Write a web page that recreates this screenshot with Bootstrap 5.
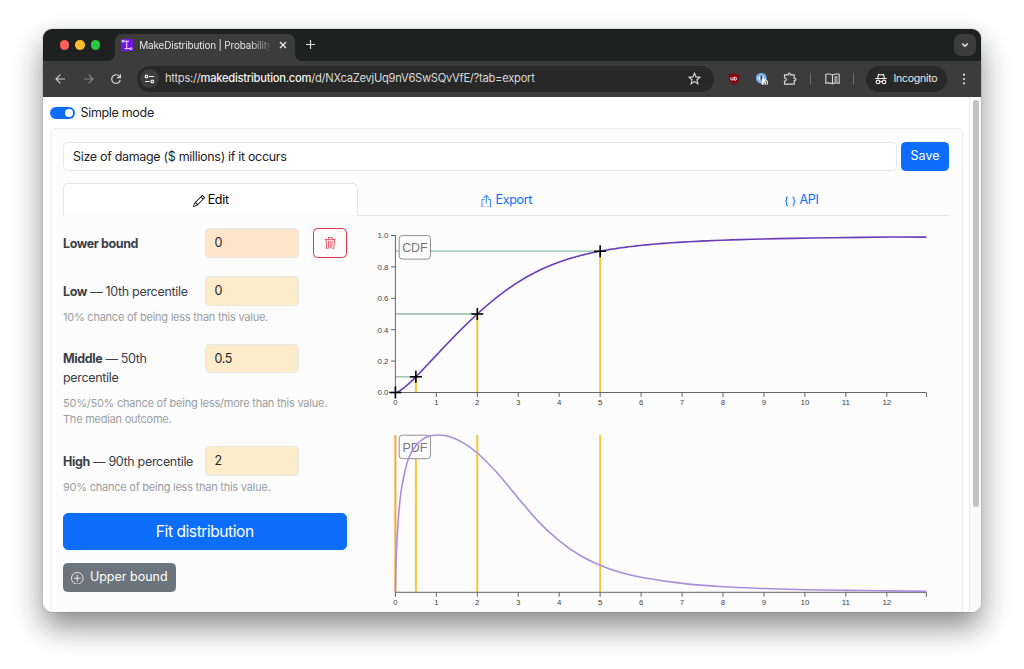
<!DOCTYPE html>
<html lang="en">
<head>
<meta charset="utf-8">
<title>MakeDistribution | Probability</title>
<link href="https://cdn.jsdelivr.net/npm/bootstrap@5.3.0/dist/css/bootstrap.min.css" rel="stylesheet">
<style>
html{font-size:12.5px}
body{font-family:Inter,"Liberation Sans",sans-serif;background:#fff;overflow:hidden;height:669px;padding:29px 43px;line-height:1.5;color:#212529;letter-spacing:-.32px}
svg{display:block;flex:none}
.window{width:938px;height:582.5px;border-radius:9px;box-shadow:0 0 1px rgba(0,0,0,.7),0 15px 30px rgba(0,0,0,.46)}
.window-clip{border-radius:9px;overflow:hidden;height:100%;background:#fff}
.tabstrip{height:31.5px;background:#1f2020;padding-left:16.5px}
.light{width:9.6px;height:9.6px;border-radius:50%;margin-right:6px}
.browser-tab{position:relative;margin-left:9px;margin-top:5px;width:179.5px;height:26.5px;background:#3c3c3c;border-radius:7px 7px 0 0;padding:0 8px 4.5px 6px;color:#e6e6e6;font-size:10px;letter-spacing:-.2px}
.browser-tab::before,.browser-tab::after{content:"";position:absolute;bottom:0;width:7px;height:7px}
.browser-tab::before{left:-7px;background:radial-gradient(circle at 0 0,transparent 6.8px,#3c3c3c 7px)}
.browser-tab::after{right:-7px;background:radial-gradient(circle at 100% 0,transparent 6.8px,#3c3c3c 7px)}
.tab-title{width:130px;white-space:nowrap;-webkit-mask-image:linear-gradient(90deg,#000 84%,rgba(0,0,0,.25))}
.tab-menu{width:21.5px;height:21.5px;border-radius:7px;background:#3c3c3c;margin:0 5.5px 0 auto}
.toolbar-row{height:36.5px;background:#3c3c3c;padding-left:11px;color:#dcdcdc}
.omnibox{width:577px;height:26px;border-radius:13px;background:#282828;padding:0 12.5px 0 3.5px}
.tune{width:19px;height:19px;border-radius:50%;background:#3c3c3c}
.url{margin-left:6px;font-size:11.2px;white-space:nowrap;color:#d8d8d8;letter-spacing:-.27px}
.url b{font-weight:500;color:#f2f2f2}
.sep{width:1px;height:12px;background:#6c6c6c}
.incog{height:26px;width:81px;border-radius:13px;background:#282828;font-size:10.6px;letter-spacing:-.3px;color:#e8e8e8;padding-left:9px}
.page{height:514.5px}
.page-main{width:926px;padding:0 6.5px 0 7px}
.scroll-track{width:12px;background:#fafafa;border-left:1px solid #e9e9e9;padding:2.5px 0 0 2.5px}
.scroll-thumb{width:6.5px;height:407px;border-radius:4px;background:#c1c1c1}
.mode-row{height:31px;padding-top:1px}
.switch{width:25px;height:12.5px;border-radius:7px;background:#0d6efd;padding:2px;margin-right:5.5px}
.switch i{width:8.5px;height:8.5px;border-radius:50%;background:#fff;margin-left:auto}
.panel{height:500px;border:1px solid #efefef;border-radius:5px;background:#fcfcfc;padding:12.5px 12.5px 0 12px}
.panel .form-control{border-color:#e5e8ea;border-radius:4.5px;height:29.5px;padding:0 9px;color:#212529;font-size:12.5px;letter-spacing:-.32px}
.panel .btn{border-radius:4.5px;font-size:12.5px}
.save{width:48px;height:29.5px;padding:1px 0 0}
.nav-tabs{margin-top:12px;border-color:#e3e6e8}
.nav-tabs .nav-link{height:32.5px;padding:1.5px 0 0;border-radius:5px 5px 0 0}
.nav-tabs .nav-link.active{border-color:#e3e6e8 #e3e6e8 #fcfcfc;color:#000}
.form-side{width:283.5px;margin-top:12.5px;color:#3c4147}
.field{height:29.5px}
.field-label{width:141.5px;padding-top:5.5px;line-height:19px;flex:none}
.field-label b{letter-spacing:-.4px}
.two-line{height:48.5px}
.panel .form-control.val{width:94px}
.bg-bound{background:#ffe5ca}
.bg-quant{background:#fdecc9}
.hint{font-size:11px;line-height:16px;color:#9b9ea2;letter-spacing:-.24px}
.trash{width:33.5px;height:29.5px;margin-left:14.5px;padding:0}
.panel .fit{height:37px;font-size:15.5px;letter-spacing:-.42px;padding:1px 0 0;width:283.5px;border-radius:5px}
.upper{width:113px;height:29.5px;padding:1px 0 0}
.plots{margin-left:13px}
.tick text{font:7.9px "Liberation Sans",sans-serif;fill:#444;letter-spacing:0}
.badge-text{font:12.400px "Liberation Sans",sans-serif;fill:#777;letter-spacing:0}
</style>
</head>
<body>
<div class="window"><div class="window-clip">
  <div class="tabstrip d-flex align-items-center">
    <div class="light" style="background:#ff5f57"></div><div class="light" style="background:#febc2e"></div><div class="light" style="background:#28c840"></div>
    <div class="browser-tab d-flex align-items-center">
      <svg width="12" height="12" viewBox="0 0 12 12" style="margin-right:6px"><rect width="12" height="12" rx="1.5" fill="#7412ee"/><g fill="none" stroke="#fff" stroke-width=".9"><circle cx="1.9" cy="2.2" r="1"/><path d="M3 2.2h5M5.7 2.2v7.3M3.6 9.6H9"/><circle cx="10" cy="9.7" r="1"/></g></svg>
      <div class="tab-title">MakeDistribution | Probability</div>
      <svg width="8" height="8" viewBox="0 0 8 8" class="ms-auto" stroke="#eee" stroke-width="1.3"><path d="M1 1l6 6M7 1L1 7"/></svg>
    </div>
    <svg width="9" height="9" viewBox="0 0 9 9" style="margin-left:11px" stroke="#ddd" stroke-width="1.2"><path d="M4.5 0v9M0 4.5h9"/></svg>
    <div class="tab-menu d-flex align-items-center justify-content-center"><svg width="8" height="6" viewBox="0 0 8 6" fill="none" stroke="#eee" stroke-width="1.4"><path d="M1.2 1.5L4 4.2l2.800-2.700"/></svg></div>
  </div>
  <div class="toolbar-row d-flex align-items-center">
    <svg width="13" height="12" viewBox="0 0 13 12" fill="none" stroke="#d0d0d0" stroke-width="1.1"><path d="M11 6H2M6.300 1.700L2 6l4.300 4.300"/></svg>
    <svg width="13" height="12" viewBox="0 0 13 12" fill="none" stroke="#858585" stroke-width="1.1" style="margin-left:15px"><path d="M2 6h9M6.700 1.700L11 6l-4.300 4.300"/></svg>
    <svg width="12" height="12" viewBox="0 0 12 12" fill="none" stroke="#d0d0d0" stroke-width="1.2" style="margin-left:15px"><path d="M10.200 7A4.300 4.300 0 1 1 9.300 3.300L10.300 4.500M10.400 1.200v3.500H7"/></svg>
    <div class="omnibox d-flex align-items-center" style="margin-left:14.500px">
      <div class="tune d-flex align-items-center justify-content-center"><svg width="11" height="10" viewBox="0 0 11 10" fill="none" stroke="#eee" stroke-width="1.200"><circle cx="2.500" cy="2.500" r="1.300"/><path d="M5 2.500h5M1 7.500h4.500"/><circle cx="8.300" cy="7.500" r="1.300"/></svg></div>
      <div class="url">https://<b>makedistribution.com</b>/d/NXcaZevjUq9nV6SwSQvVfE/?tab=export</div>
      <svg width="13" height="13" viewBox="0 0 13 13" class="ms-auto" fill="none" stroke="#dcdcdc" stroke-width="1.100"><path d="M6.500 1.200l1.500 3.700 4 .3-3.100 2.600 1 3.900-3.400-2.100-3.400 2.100 1-3.900L1 5.200l4-.3z"/></svg>
    </div>
    <svg width="12" height="12" viewBox="0 0 12 12" style="margin-left:14px"><path d="M6 0c1.500 1 3.500 1.400 5.300 1.500C11.500 6 11 9.500 6 12 1 9.500.5 6 .7 1.500 2.500 1.400 4.500 1 6 0z" fill="#800610"/><path d="M2.900 4.200v1.900a1.100 1.100 0 0 0 2.200 0V4.200M6.300 4.200v3h.8a1.500 1.500 0 0 0 0-3z" fill="none" stroke="#fff" stroke-width=".9"/></svg>
    <svg width="13" height="13" viewBox="0 0 13 13" style="margin-left:15.500px"><circle cx="6.300" cy="6.200" r="5.500" fill="#5b9be0"/><circle cx="6.300" cy="6.200" r="4.300" fill="#e9f3ff"/><circle cx="6.300" cy="6.200" r="3.300" fill="none" stroke="#6ba5e4" stroke-width="1.100"/><rect x="5.500" y="3.600" width="1.700" height="5.200" rx=".8" fill="#1d3557"/><path d="M6.800 13V8.500l-.3-1.500h3.500l2.800 2v3.500H8.500z" fill="#f4f4f4"/><path d="M9.800 9.300a1 1 0 0 1 1.600.8v2M9.300 12.300v-1.500" stroke="#333" fill="none" stroke-width=".8"/></svg>
    <svg width="14" height="14" viewBox="0 0 14 14" style="margin-left:15px" fill="none" stroke="#d6d6d6" stroke-width="1.200"><path d="M1.500 2.800H5.200V2.200a1.100 1.100 0 0 1 2.200 0v.6H11.200v3.500h.5a1.100 1.100 0 0 1 0 2.200h-.5v3.700H1.500V9.300C3.900 9 3.900 6.100 1.500 5.800z"/></svg>
    <div class="sep" style="margin-left:13px"></div>
    <svg width="15" height="12" viewBox="0 0 15 12" style="margin-left:14px" fill="none" stroke="#d6d6d6" stroke-width="1.100"><path d="M7.500 2C5.500.800 3 .800.800 1.300v8.900c2.200-.5 4.700-.5 6.700.7 2-1.200 4.500-1.200 6.700-.7V1.300C12 .8 9.500.8 7.500 2v8.900M9.300 4.300c1-.4 2-.5 3.200-.4M9.300 6.300c1-.4 2-.5 3.200-.4M9.300 8.300c1-.4 2-.5 3.200-.4"/></svg>
    <div class="sep" style="margin-left:13px"></div>
    <div class="incog d-flex align-items-center" style="margin-left:12px">
      <svg width="12" height="12" viewBox="0 0 12 12" style="margin-right:6.500px" fill="none" stroke="#eee" stroke-width="1.200"><path d="M.300 5.500h11.400M2.600 5.200l1-3.800L6 2l2.400-.600 1 3.800"/><circle cx="3" cy="8.900" r="1.800"/><circle cx="9" cy="8.900" r="1.800"/><path d="M4.800 8.700q1.200-.800 2.400 0"/></svg>Incognito</div>
    <svg width="4" height="12" viewBox="0 0 4 12" style="margin-left:15px" fill="#dcdcdc"><circle cx="2" cy="1.700" r="1.100"/><circle cx="2" cy="6" r="1.100"/><circle cx="2" cy="10.300" r="1.100"/></svg>
  </div>

  <div class="page d-flex">
    <div class="page-main">
      <div class="mode-row d-flex align-items-center"><div class="switch d-flex"><i></i></div>Simple mode</div>
      <div class="panel">
        <div class="d-flex justify-content-between">
          <input class="form-control" style="width:833.500px" value="Size of damage ($ millions) if it occurs">
          <button class="btn btn-primary save">Save</button>
        </div>
        <ul class="nav nav-tabs nav-justified">
          <li class="nav-item"><a class="nav-link active d-flex align-items-center justify-content-center"><svg width="12" height="12" viewBox="0 0 16 16" fill="currentColor" style="margin:2px 3px 0 0"><path d="M12.146.146a.5.5 0 0 1 .708 0l3 3a.5.5 0 0 1 0 .708l-10 10a.5.5 0 0 1-.168.110l-5 2a.5.5 0 0 1-.650-.650l2-5a.5.5 0 0 1 .110-.168l10-10zM11.207 2.500 13.500 4.793 14.793 3.500 12.500 1.207 11.207 2.500zm1.586 3L10.500 3.207 4 9.707V10h.5a.5.5 0 0 1 .5.5v.5h.5a.5.5 0 0 1 .5.5v.5h.293l6.500-6.500zm-9.761 5.175-.106.106-1.528 3.821 3.821-1.528.106-.106A.5.5 0 0 1 5 12.500V12h-.5a.5.5 0 0 1-.5-.5V11h-.5a.5.5 0 0 1-.468-.325z"/></svg>Edit</a></li>
          <li class="nav-item"><a class="nav-link d-flex align-items-center justify-content-center"><svg width="12.500" height="12.500" viewBox="0 0 16 16" fill="currentColor" style="margin:2px 3px 0 0"><path fill-rule="evenodd" d="M3.500 6a.5.5 0 0 0-.5.5v8a.5.5 0 0 0 .5.5h9a.5.5 0 0 0 .5-.5v-8a.5.5 0 0 0-.5-.5h-2a.5.5 0 0 1 0-1h2A1.500 1.500 0 0 1 14 6.500v8a1.500 1.500 0 0 1-1.500 1.500h-9A1.500 1.500 0 0 1 2 14.500v-8A1.500 1.500 0 0 1 3.500 5h2a.5.5 0 0 1 0 1h-2z"/><path fill-rule="evenodd" d="M7.646.146a.5.5 0 0 1 .708 0l3 3a.5.5 0 0 1-.708.708L8.500 1.707V10.500a.5.5 0 0 1-1 0V1.707L5.354 3.854a.5.5 0 1 1-.708-.708l3-3z"/></svg>Export</a></li>
          <li class="nav-item"><a class="nav-link d-flex align-items-center justify-content-center"><svg width="12.500" height="12.500" viewBox="0 0 16 16" fill="none" stroke="currentColor" stroke-width="1.300" style="margin:2px 3px 0 0"><path d="M5 2.600H4.600Q3.200 2.600 3.200 4.200V6.400Q3.200 8 1.400 8 3.200 8 3.200 9.600V11.800Q3.200 13.400 4.600 13.400H5M11 2.600H11.400Q12.800 2.600 12.800 4.200V6.400Q12.800 8 14.600 8 12.800 8 12.800 9.600V11.800Q12.800 13.400 11.400 13.400H11"/></svg>API</a></li>
        </ul>
        <div class="d-flex">
          <div class="form-side">
            <div class="field d-flex"><div class="field-label"><b>Lower bound</b></div><input class="form-control val bg-bound" value="0">
              <button class="btn btn-outline-danger trash d-flex align-items-center justify-content-center"><svg width="12.500" height="12.500" viewBox="0 0 16 16" fill="currentColor"><path d="M6.500 1h3a.5.5 0 0 1 .5.5v1H6v-1a.5.5 0 0 1 .5-.5ZM11 2.500v-1A1.500 1.500 0 0 0 9.500 0h-3A1.500 1.500 0 0 0 5 1.500v1H2.506a.58.58 0 0 0-.010 0H1.500a.5.5 0 0 0 0 1h.538l.853 10.660A2 2 0 0 0 4.885 16h6.230a2 2 0 0 0 1.994-1.840l.853-10.660h.538a.5.5 0 0 0 0-1h-.995a.59.59 0 0 0-.010 0H11Zm1.958 1-.846 10.580a1 1 0 0 1-.997.920h-6.230a1 1 0 0 1-.997-.920L3.042 3.500h9.916Zm-7.487 1a.5.5 0 0 1 .528.470l.5 8.500a.5.5 0 0 1-.998.060L5 5.030a.5.5 0 0 1 .470-.530Zm5.058 0a.5.5 0 0 1 .470.530l-.5 8.500a.5.5 0 1 1-.998-.060l.5-8.500a.5.5 0 0 1 .528-.470ZM8 4.500a.5.5 0 0 1 .5.5v8.500a.5.5 0 0 1-1 0V5a.5.5 0 0 1 .5-.5Z"/></svg></button></div>
            <div class="field d-flex" style="margin-top:18.500px"><div class="field-label"><b>Low</b> — 10th percentile</div><input class="form-control val bg-quant" value="0"></div>
            <div class="hint" style="margin-top:3px">10% chance of being less than this value.</div>
            <div class="field two-line d-flex" style="margin-top:19px"><div class="field-label"><b>Middle</b> — 50th<br>percentile</div><input class="form-control val bg-quant" value="0.5"></div>
            <div class="hint" style="margin-top:3px">50%/50% chance of being less/more than this value.<br>The median outcome.</div>
            <div class="field d-flex" style="margin-top:19px"><div class="field-label"><b>High</b> — 90th percentile</div><input class="form-control val bg-quant" value="2"></div>
            <div class="hint" style="margin-top:3px">90% chance of being less than this value.</div>
            <button class="btn btn-primary fit" style="margin-top:18.500px">Fit distribution</button>
            <button class="btn btn-secondary upper d-flex align-items-center justify-content-center" style="margin-top:12.500px"><svg width="12.500" height="12.500" viewBox="0 0 16 16" fill="none" stroke="currentColor" style="margin-right:6px"><circle cx="8" cy="8" r="7.500"/><path d="M8 4v8M4 8h8" stroke-linecap="round"/></svg>Upper bound</button>
          </div>
          <svg class="plots" id="plots" width="590" height="396" viewBox="360 216 590 396"></svg>
        </div>
      </div>
    </div>
    <div class="scroll-track"><div class="scroll-thumb"></div></div>
  </div>
</div></div>
<script src="https://cdn.jsdelivr.net/npm/bootstrap@5.3.0/dist/js/bootstrap.bundle.min.js"></script>
<script>
const X = v => 395.4 + v * 40.95, XMAX = 926.4;
let out = '';
const line = (x1, y1, x2, y2, c, w) => { out += `<path d="M${x1} ${y1}L${x2} ${y2}" stroke="${c}" stroke-width="${w}" fill="none"/>`; };
const label = (x, y, t, anchor) => { out += `<g class="tick"><text x="${x}" y="${y}" text-anchor="${anchor}">${t}</text></g>`; };
function xAxis(y) {
  out += `<path d="M395.4 ${y}H${XMAX}v4.5" stroke="#555" stroke-width=".9" fill="none"/>`;
  for (let i = 0; i <= 12; i++) { line(X(i), y, X(i), y + 4.5, '#555', .9); label(X(i), y + 12.4, i, 'middle'); }
}
// Cumulative plot
const Y = p => 392.5 - p * 157;
const quantiles = [[.5, .1], [2, .5], [5, .9]];
quantiles.forEach(([x, p]) => { line(395.4, Y(p), X(x), Y(p), '#8dbda0', 1.3); line(X(x), Y(p), X(x), 392.5, '#f9c637', 2); });
out += `<path d="M391 235.500H395.400V392.500" stroke="#555" stroke-width=".9" fill="none"/>`;
for (let i = 0; i <= 5; i++) { const p = i / 5; line(391, Y(p), 395.4, Y(p), '#555', .9); label(388.500, Y(p) + 2.800, p.toFixed(1), 'end'); }
xAxis(392.5);
let d = 'M395.4 392.5';
for (let p = .002; p < .995; p += .002) {
  const L = Math.log(p / (1 - p)), x = Math.exp(.6931 + .524 * L - .2674 * (p - .5) * L);
  if (X(x) > XMAX) break;
  d += `L${X(x).toFixed(2)} ${Y(p).toFixed(2)}`;
}
d += `L${XMAX} 237.1`;
out += `<path d="${d}" stroke="#6a3cb8" stroke-width="1.600" stroke-linejoin="round" fill="none"/>`;
[[0, 0], ...quantiles].forEach(([x, p]) => { line(X(x) - 6, Y(p), X(x) + 6, Y(p), '#000', 1.6); line(X(x), Y(p) - 6, X(x), Y(p) + 6, '#000', 1.6); });
const box = (y, t) => { out += `<rect x="399.200" y="${y}" width="31.300" height="23.500" rx="3" fill="#fcfcfc" stroke="#858585" stroke-width=".9"/><text class="badge-text" x="414.900" y="${y + 16.4}" text-anchor="middle">${t}</text>`; };
box(235.6, 'CDF');
// Density plot
[[0, '#fba931'], [.5, '#f9c637'], [2, '#f9c637'], [5, '#f9c637']].forEach(([x, c]) => line(X(x), 435, X(x), 592.2, c, 2));
xAxis(592.3);
box(435.2, 'PDF');
const pts = [[395.4,592],[396,563],[398,523],[400.8,493.500],[404,475.500],[408.500,458.500],[415.700,445.800],[423.300,438.900],[430,436.100],[437.700,435],[450,436.700],[463.300,442.900],[477.300,453],[497,472.800],[518.300,498.200],[538.500,521.600],[559.300,540.800],[579,554.800],[600,565.200],[620,572.200],[641,577.200],[682.300,583.400],[723.300,586.800],[764,588.500],[805,589.700],[846,590.400],[887,590.900],[XMAX,591.300]];
let c = `M${pts[0]}`;
for (let i = 0; i < pts.length - 1; i++) {
  const a = pts[Math.max(0, i - 1)], b = pts[i], e = pts[i + 1], f = pts[Math.min(pts.length - 1, i + 2)];
  const h = e[0] - b[0], m1 = (e[1] - a[1]) / (e[0] - a[0]), m2 = (f[1] - b[1]) / (f[0] - b[0]);
  c += `C${b[0] + h / 3} ${b[1] + m1 * h / 3} ${e[0] - h / 3} ${e[1] - m2 * h / 3} ${e[0]} ${e[1]}`;
}
out += `<path d="${c}" stroke="#a98fdb" stroke-width="1.600" fill="none"/>`;
document.getElementById('plots').innerHTML = out;
</script>
</body>
</html>
